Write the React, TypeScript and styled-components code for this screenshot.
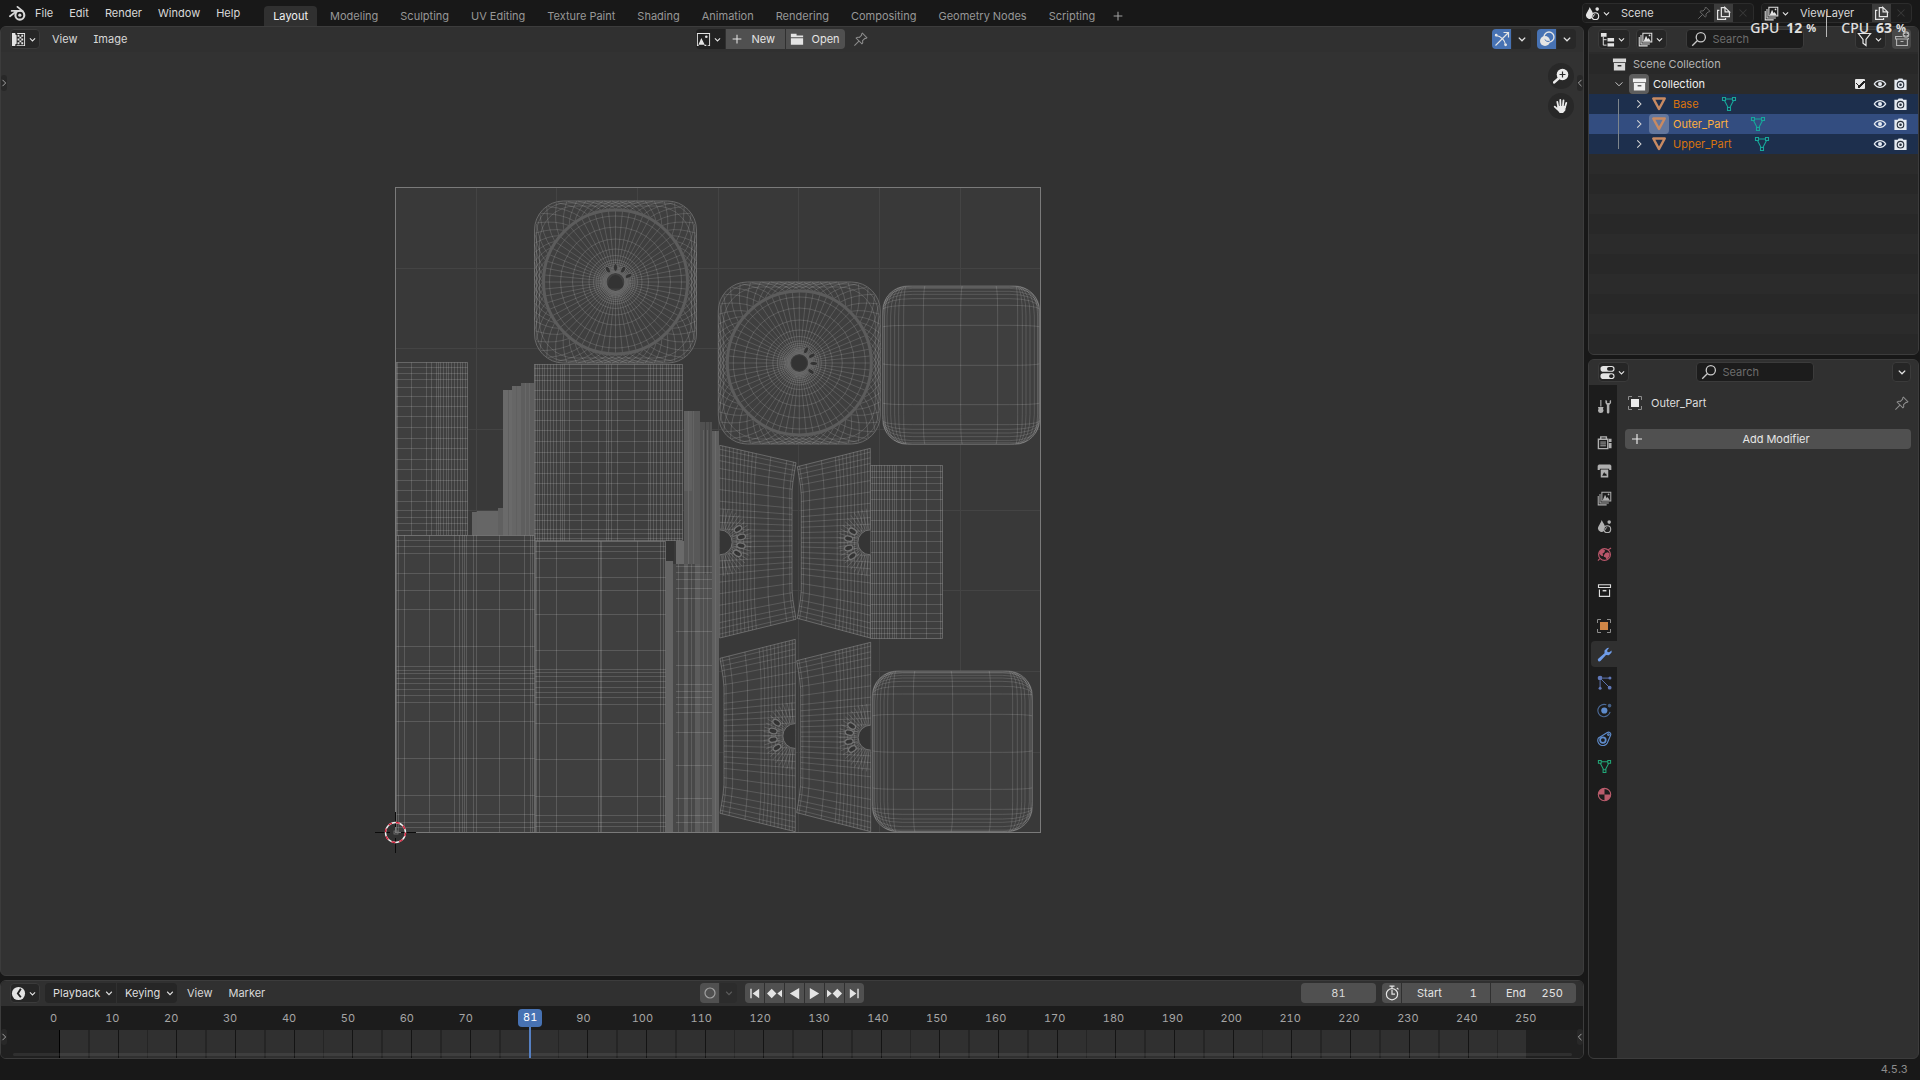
import React, { useState } from 'react';
import styled, { createGlobalStyle, css } from 'styled-components';

const GlobalStyle = createGlobalStyle`
  * { box-sizing: border-box; }
  html, body, #root { margin: 0; min-height: 100vh; }
  body {
    background: #181818;
    color: #d8d8d8;
    font-family: Inter, "Liberation Sans", sans-serif;
    font-size: 11px;
    line-height: 16px;
    font-feature-settings: "tnum", "cv08";
    overflow: hidden;
  }
  button, input { font: inherit; font-feature-settings: inherit; color: inherit; margin: 0; }
`;

/* ---------- icons ---------- */

const icons: Record<string, React.ReactNode> = {
  blender: (
    <g fill="none" stroke="currentColor" strokeLinecap="round" strokeLinejoin="round">
      <circle cx="10.2" cy="9.6" r="4.2" strokeWidth="2" />
      <circle cx="10.2" cy="9.6" r="1.5" fill="currentColor" stroke="none" />
      <path d="M8 1.8l5 4M2.5 5.6h7.5M6.5 6.2L.9 10.6" strokeWidth="1.7" />
    </g>
  ),
  down: <path d="M4.8 6.6L8 9.8l3.2-3.2" fill="none" stroke="currentColor" strokeWidth="1.3" />,
  right: <path d="M6 3.8L10.2 8 6 12.2" fill="none" stroke="currentColor" strokeWidth="1.2" />,
  left: <path d="M10 3.8L5.8 8l4.2 4.2" fill="none" stroke="currentColor" strokeWidth="1.2" />,
  bigdown: <path d="M3.4 5.8L8 10.4l4.6-4.6" fill="none" stroke="currentColor" strokeWidth="1.2" />,
  plus: <path d="M8 3v10M3 8h10" stroke="currentColor" strokeWidth="1.2" />,
  cross: <path d="M4 4l8 8M12 4l-8 8" stroke="currentColor" strokeWidth="1.2" />,
  uv: (
    <g fill="currentColor">
      <path d="M1 1h3.6v1.6L6 3.4v9L4.6 13v2H1z" />
      <path d="M6.6 1H15v14H6v-1h8V2H6.6z" />
      <path d="M7 3h2v2H7zM11 3h2v2h-2zM9 5h2v2H9zM7 7h2v2H7zM11 7h2v2h-2zM9 9h2v2H9zM7 11h2v2H7zM11 11h2v2h-2z" />
    </g>
  ),
  image: (
    <g fill="currentColor">
      <path d="M1 1h14v14h-2.5v-1H14V2H2v12h1v1H1z" />
      <path d="M2.5 13.5L5.7 6.5l3.6 7zM9 15h2v-1.4H9z" />
      <circle cx="11" cy="5" r="1.4" />
    </g>
  ),
  folder: <path d="M1 2h6.5v2H15v2H1zM1 7h14v7.5H1z" fill="currentColor" />,
  pin: (
    <path
      d="M10 1.2L14.8 6l-1 .9-1-.2-2.6 2.6c.5 1.4.2 2.6-.7 3.4L3.300 6.500c.9-.9 2.100-1.200 3.500-.7L9.300 3.200l-.2-1zM6.300 9.700L1.500 14.500"
      fill="none"
      stroke="currentColor"
      strokeWidth="1.1"
    />
  ),
  gizmo: (
    <g fill="none" stroke="currentColor" strokeWidth="1.2">
      <path d="M2 4.500c5 .5 9 4.500 9.500 9.500M1.500 14.500L14 2M9.500 1.500h5v5" />
      <circle cx="2.200" cy="4.200" r=".8" fill="currentColor" />
      <circle cx="11.600" cy="13.800" r=".8" fill="currentColor" />
    </g>
  ),
  overlays: (
    <g>
      <circle cx="6" cy="10" r="5" fill="currentColor" />
      <circle cx="10" cy="6" r="5" fill="none" stroke="currentColor" strokeWidth="1.3" />
      <path d="M5.700 8.500a4.500 4.500 0 0 0 4.800 1.900" fill="none" stroke="#4772b3" strokeWidth="1" />
    </g>
  ),
  zoom: (
    <g>
      <circle cx="9.500" cy="6.500" r="5.800" fill="currentColor" />
      <path d="M5.500 10.500L1 14.500" stroke="currentColor" strokeWidth="2.400" strokeLinecap="round" />
      <path d="M9.500 3.500v6M6.500 6.500h6" stroke="#2a2a2a" strokeWidth="1.200" />
    </g>
  ),
  hand: (
    <g stroke="currentColor" fill="none" strokeLinecap="round" strokeLinejoin="round">
      <path d="M5.300 9L4.300 3.800M7.500 8L7.300 2M9.900 8L10.500 2.400M12 9.200L13.300 4.800M4.600 11.400L1.700 8.600" strokeWidth="1.800" />
      <path d="M5 8.500h7.200l-.4 3.500-2 2.400H7L4.600 11.400z" fill="currentColor" strokeWidth="1.200" />
    </g>
  ),
  scene: (
    <g fill="currentColor">
      <path d="M5 1c1.200 3 3.600 5 3.600 8l-1 3.500A3.800 3.800 0 0 1 1 10.500C1 7 4 5 5 1z" />
      <circle cx="13" cy="3.300" r="1.900" />
      <circle cx="11" cy="10.800" r="3.600" fill="#222" stroke="currentColor" strokeWidth="1.200" />
      <path d="M9 11.500a2 2 0 0 1 1.800-2.400" fill="none" stroke="currentColor" strokeWidth=".9" />
    </g>
  ),
  copy: (
    <g fill="none" stroke="currentColor" strokeWidth="1.300">
      <path d="M9.500 1.700H5.700v9.600h8.600V6M9.500 1.500L14.500 6.300H9.700zM3.600 4.700H1.700v9.600h8.500v-1.600" />
    </g>
  ),
  viewlayer: (
    <g fill="none" stroke="currentColor" strokeWidth="1.100">
      <path d="M5.200 1.300h9.500v9.400H5.200zM3.200 3.300v9.500h9.400M1.300 5.300v9.500h9" />
      <path d="M6 10l2.600-6 1.700 3.600 1-1.300L13.800 10z" fill="currentColor" stroke="none" />
      <circle cx="12.300" cy="3.600" r=".9" fill="currentColor" stroke="none" />
    </g>
  ),
  outliner: (
    <g>
      <path d="M1 1h6v4H1zM8 6.500h7V10H8zM8 12h7v3.500H8z" fill="currentColor" />
      <path d="M3.500 5v9H7M3.500 8.200H7" fill="none" stroke="currentColor" />
    </g>
  ),
  search: (
    <g fill="none" stroke="currentColor" strokeWidth="1.300">
      <circle cx="9.800" cy="6.200" r="4.600" />
      <path d="M6.500 9.500L1.200 14.800" />
    </g>
  ),
  filter: <path d="M1.500 1.600h13L9.600 8v6.500L6.400 12V8z" fill="none" stroke="currentColor" strokeWidth="1.300" />,
  newcollection: (
    <g fill="none" stroke="currentColor" strokeWidth="1.100">
      <path d="M8.500 5.500H1.600V8h12.800V7M2.600 8v6.500h10.800V8M6.500 10.500h3" />
      <circle cx="12" cy="3.500" r="3.300" fill="currentColor" stroke="none" />
      <path d="M12 1.600v3.800M10.100 3.500h3.800" stroke="#444" />
    </g>
  ),
  box: <path d="M1 1.500h14v4H1zM2 6.500h12v8H2zm4 2v1.700h4V8.500z" fill="currentColor" fillRule="evenodd" />,
  boxline: (
    <g fill="none" stroke="currentColor" strokeWidth="1.200">
      <path d="M1.600 1.800h12.800v3H1.600zM2.600 7v7.200h10.800V7" />
      <path d="M6 8.200h4" strokeWidth="1.600" />
    </g>
  ),
  eye: (
    <g>
      <path d="M1.500 8C4.500 2.800 11.500 2.800 14.500 8 11.500 13 4.500 13 1.500 8z" fill="none" stroke="currentColor" strokeWidth="1.500" />
      <circle cx="8" cy="8" r="2.300" fill="currentColor" />
    </g>
  ),
  camera: (
    <g>
      <path d="M1.500 3H5l1-1.500h4L11 3h3.500v10.800h-13z" fill="currentColor" />
      <circle cx="8" cy="8.200" r="3.500" fill="none" stroke="#28303c" strokeWidth="1.200" />
      <circle cx="8" cy="8.200" r="1.400" fill="#28303c" />
    </g>
  ),
  mesh: <path d="M2.300 2.500h11.400L8 13z" fill="none" stroke="currentColor" strokeWidth="2.500" strokeLinejoin="round" />,
  meshdata: (
    <g fill="none" stroke="currentColor" strokeWidth="1.100">
      <path d="M4.500 3h7M3.500 4.500l3.600 7M12.500 4.500l-3.600 7" />
      <path d="M1.500 1.500h3v3h-3zM11.500 1.500h3v3h-3zM6.500 11.500h3v3h-3z" />
    </g>
  ),
  properties: (
    <g>
      <rect x=".5" y="1" width="15" height="6.300" rx="3" fill="currentColor" />
      <rect x=".5" y="8.700" width="15" height="6.300" rx="3" fill="currentColor" />
      <rect x="7.500" y="2.200" width="6.800" height="3.900" rx="1.900" fill="#222" />
      <rect x="9.800" y="9.900" width="4.500" height="3.900" rx="1.900" fill="#222" />
    </g>
  ),
  tools: (
    <g fill="currentColor">
      <path d="M3.500 1h1.200v7H3.500z" />
      <path d="M1 8.500h6l-.6 2 .6 2A3 3 0 0 1 4 15a3 3 0 0 1-3-2.500l.6-2z" />
      <path d="M9 1v3.300L10.500 6.500V14a1.300 1.300 0 0 0 2.700 0V6.500L15 4.300V1l-1.500.8v2.400h-2.700V1.800z" />
    </g>
  ),
  render: (
    <g fill="none" stroke="currentColor">
      <path d="M1.500 4.500h10v10h-10zM4 4.500V2h6v2.500" strokeWidth="1.500" />
      <path d="M3.500 7.500h6M3.500 9.500h6M3.500 11.500h6" />
      <path d="M12.500 4h3v3.500h-3zM12.500 8.500h3V14h-3z" fill="currentColor" stroke="none" />
    </g>
  ),
  output: (
    <g fill="currentColor">
      <path d="M2 1.500h12l1.300 1.500v4.500H13V6H3v1.500H.7V3z" />
      <path d="M4 7h8v8.500H4zm1.500 6.500h5L9.600 11l-1 .6-.9-2z" fillRule="evenodd" />
    </g>
  ),
  world: (
    <g>
      <circle cx="8" cy="8" r="6.300" fill="none" stroke="currentColor" strokeWidth="1.300" />
      <path d="M2.500 4.500L6 2.200l2.500 1.300-.5 2.200-2.200 1.500 1 1.800-1.500.8-3-2.500zM9 6.500l2.500-.8 2 1.300-.5 3-2.500 3.500-1.500-2.500-1.800-.5.3-2z" fill="currentColor" />
      <path d="M12 3l3-2M1 14.500l2-2" stroke="currentColor" strokeWidth="1.200" />
    </g>
  ),
  wrench: (
    <path
      d="M10.800 1L8 3.700v3L1.300 12.500a1.700 1.700 0 0 0 2.400 2.400L9.600 8.600l3 .1L15.400 6l.3-2.400L12.900 5.700l-1.800-.4-.2-1.900L13 .9z"
      fill="currentColor"
    />
  ),
  particles: (
    <g fill="currentColor">
      <circle cx="3.300" cy="3.300" r="2.600" />
      <circle cx="13.800" cy="3.300" r="1.600" />
      <circle cx="3.300" cy="14" r="1.600" />
      <circle cx="13.500" cy="13.500" r="2" />
      <path d="M6 3.300h7M3.300 6v7M5.200 5.200l8 8" stroke="currentColor" />
    </g>
  ),
  physics: (
    <g>
      <circle cx="7.800" cy="8" r="3.300" fill="currentColor" />
      <path d="M10 1.900A6.600 6.600 0 1 0 14 9.500" fill="none" stroke="currentColor" strokeWidth="1.200" opacity=".7" />
      <circle cx="13.400" cy="2.800" r="1.900" fill="currentColor" opacity=".6" />
    </g>
  ),
  constraint: (
    <g fill="none" stroke="currentColor" strokeWidth="1.200">
      <circle cx="6.300" cy="9.700" r="3" strokeWidth="1.900" />
      <path d="M1.500 7.500L11 1.600c2-1.200 4.400.7 3.500 2.900L11 12.700A5.400 5.400 0 1 1 1.500 7.500z" />
      <circle cx="12.200" cy="3.800" r=".9" />
    </g>
  ),
  material: (
    <g>
      <circle cx="8" cy="8" r="6.600" fill="none" stroke="currentColor" strokeWidth="1.200" />
      <path d="M8 8V1.400A6.600 6.600 0 0 0 1.400 8zM8 8v6.600A6.600 6.600 0 0 0 14.600 8z" fill="currentColor" />
    </g>
  ),
  clock: (
    <g>
      <circle cx="8" cy="8" r="7" fill="currentColor" />
      <path d="M10.500 3L7.300 8l3.200 4" fill="none" stroke="#222" strokeWidth="2" />
    </g>
  ),
  ring: <circle cx="8" cy="8" r="5" fill="none" stroke="currentColor" strokeWidth="1.200" />,
  first: <path d="M3.500 3H5v10H3.500zM13 3v10L6 8z" fill="currentColor" />,
  last: <path d="M11 3h1.500v10H11zM3 3v10l7-5z" fill="currentColor" />,
  prevkey: <path d="M5 3l5 5-5 5-5-5zM16 4v8l-5-4z" fill="currentColor" />,
  nextkey: <path d="M11 3l5 5-5 5-5-5zM0 4v8l5-4z" fill="currentColor" />,
  playback: <path d="M13 2v12L3 8z" fill="currentColor" />,
  play: <path d="M3 2v12l10-6z" fill="currentColor" />,
  stopwatch: (
    <g fill="none" stroke="currentColor" strokeWidth="1.200">
      <circle cx="8" cy="9.200" r="5.600" />
      <path d="M8 5v4.200h3M5.500 1.200h5M8 1.200v2.400M12.800 3l1.700 1.400" />
    </g>
  ),
};

const Svg = styled.svg`
  display: block;
  flex: none;
`;

function Icon({ name, size = 16, color }: { name: string; size?: number; color?: string }) {
  return (
    <Svg width={size} height={size} viewBox="0 0 16 16" color={color} aria-hidden="true">
      {icons[name]}
    </Svg>
  );
}

function ObjectIcon({ fill }: { fill: string }) {
  return (
    <Svg width={16} height={16} viewBox="0 0 16 16" aria-hidden="true">
      <rect x="4" y="4" width="8" height="8" fill={fill} />
      <path d="M1.500 5V1.500H5M11 1.500h3.500V5M14.500 11v3.500H11M5 14.500H1.500V11" fill="none" stroke="#8c8c8c" />
    </Svg>
  );
}

/* ---------- frame ---------- */

const Page = styled.div`
  display: grid;
  grid-template-rows: 26px 1fr 21px;
  height: 100vh;
`;

const Row = styled.div<{ $gap?: number }>`
  display: flex;
  align-items: center;
  gap: ${(p) => p.$gap ?? 0}px;
`;

const TopBar = styled.header`
  display: flex;
  justify-content: space-between;
  padding: 0 8px 0 9px;
`;

const MenuButton = styled.button`
  height: 20px;
  padding: 0 8px;
  border: 0;
  background: none;
  color: #d8d8d8;
  white-space: nowrap;
`;

const TabList = styled.nav`
  display: flex;
  align-items: flex-end;
  gap: 4px;
  height: 26px;
  margin-left: 16px;
`;

const Tab = styled.button<{ $active?: boolean }>`
  height: 20px;
  padding: 0 9px;
  border: 0;
  border-radius: 4px 4px 0 0;
  background: ${(p) => (p.$active ? '#303030' : 'none')};
  color: ${(p) => (p.$active ? '#f2f2f2' : '#979797')};
  white-space: nowrap;
`;

const Body = styled.main`
  display: grid;
  grid-template-columns: 1fr 331px;
  gap: 4px;
  padding-right: 1px;
  min-height: 0;
`;

const Column = styled.div`
  display: flex;
  flex-direction: column;
  gap: 4px;
  min-width: 0;
`;

const Area = styled.section<{ $bg: string; $height?: number }>`
  position: relative;
  display: flex;
  flex-direction: column;
  ${(p) => (p.$height ? `flex: none; height: ${p.$height}px;` : 'flex: 1; min-height: 0;')}
  border: 1px solid #3c3c3c;
  border-radius: 6px;
  background: ${(p) => p.$bg};
  overflow: hidden;
`;

const Header = styled.div<{ $left?: number }>`
  position: relative;
  display: grid;
  grid-template-columns: 1fr auto 1fr;
  align-items: center;
  flex: none;
  height: 25px;
  padding: 0 7px 1px ${(p) => p.$left ?? 9}px;
  background: #303030;
`;

const HeaderCenter = styled(Row)<{ $trail?: number }>`
  padding-right: ${(p) => p.$trail ?? 0}px;
`;

const HeaderEnd = styled(Row)`
  justify-content: flex-end;
`;

const widget = css`
  display: flex;
  align-items: center;
  height: 20px;
  border: 1px solid #3b3b3b;
  border-radius: 4px;
  background: #262626;
`;

const DropButton = styled.button<{ $width?: number }>`
  ${widget}
  justify-content: center;
  width: ${(p) => p.$width ?? 30}px;
  padding: 0;
  color: #e4e4e4;
`;

function Drop({ icon, label, width }: { icon: string; label: string; width?: number }) {
  return (
    <DropButton aria-label={label} $width={width}>
      <Icon name={icon} size={15} />
      <Icon name="down" size={13} />
    </DropButton>
  );
}

const Group = styled.div`
  display: flex;
  gap: 1px;
  border-radius: 4px;
  overflow: hidden;
`;

const Fill = styled.button<{ $width?: number; $bg?: string; $color?: string }>`
  display: flex;
  align-items: center;
  justify-content: center;
  width: ${(p) => p.$width ?? 19}px;
  height: 20px;
  padding: 0;
  border: 0;
  background: ${(p) => p.$bg ?? '#505050'};
  color: ${(p) => p.$color ?? '#e4e4e4'};
`;

const TextFill = styled(Fill)`
  justify-content: flex-start;
  gap: 8px;
  padding-left: 4px;
`;

const IconButton = styled.button<{ $color?: string }>`
  display: flex;
  align-items: center;
  justify-content: center;
  width: 20px;
  height: 20px;
  padding: 0;
  border: 0;
  background: none;
  color: ${(p) => p.$color ?? '#d8d8d8'};
`;

const TextMenu = styled.button<{ $width: number }>`
  display: flex;
  align-items: center;
  justify-content: space-between;
  width: ${(p) => p.$width}px;
  height: 20px;
  padding: 0 0 0 8px;
  border: 0;
  background: #262626;
  color: #dedede;
`;

const SearchBox = styled.label`
  ${widget}
  width: 118px;
  padding: 0 4px;
  gap: 6px;
  background: #1c1c1c;
  color: #c8c8c8;
  input {
    width: 100%;
    min-width: 0;
    padding: 0;
    border: 0;
    outline: 0;
    background: none;
  }
  input::placeholder { color: #6c6c6c; opacity: 1; }
`;

const DataBlock = styled.div`
  ${widget}
  border-color: #2c2c2c;
  background: #1d1d1d;
  overflow: hidden;
`;

const NameInput = styled.input<{ $width: number }>`
  width: ${(p) => p.$width}px;
  height: 18px;
  padding: 0 0 0 7px;
  border: 0;
  outline: 0;
  background: none;
`;

const Stats = styled.aside`
  position: absolute;
  top: 11px;
  right: 14px;
  display: flex;
  align-items: flex-end;
  height: 26px;
  font-family: "Noto Sans", sans-serif;
  font-size: 14px;
  font-weight: 500;
  line-height: 18px;
  color: #e0e0e0;
  pointer-events: none;
  b { margin-left: 7px; font-size: 14px; }
  small { margin-left: 4px; font-size: 11px; font-weight: 700; }
`;

const StatBar = styled.i`
  width: 1px;
  height: 26px;
  margin: 0 14px 0 10px;
  background: #b8b8b8;
`;

/* ---------- UV canvas ---------- */

const Canvas = styled.svg`
  position: absolute;
  inset: 0;
  width: 100%;
  height: 100%;
`;

type Origin = [number, number];
const snap = (v: number) => Math.round(v) + 0.5;
const at = (o: number, v: number) => o + v / 3;

function Lattice({ o, xs, ys }: { o: Origin; xs: number[]; ys: number[] }) {
  const px = xs.map((v) => snap(at(o[0], v) - 0.5));
  const py = ys.map((v) => snap(at(o[1], v) - 0.5));
  const [l, r, t, b] = [px[0], px[px.length - 1], py[0], py[py.length - 1]];
  return (
    <g>
      <rect x={l} y={t} width={r - l} height={b - t} fill="#3f3f3f" stroke="#606060" strokeWidth=".5" />
      <path className="wire" d={px.map((x) => `M${x} ${t}V${b}`).join('')} />
      <path className="wire" d={py.map((y) => `M${l} ${y}H${r}`).join('')} />
    </g>
  );
}

function Disc({ cx, cy, petals, flat }: { cx: number; cy: number; petals: number[]; flat?: boolean }) {
  const half = 81;
  const edge = (a: number) => half / Math.pow(Math.pow(Math.abs(Math.cos(a)), 6) + Math.pow(Math.abs(Math.sin(a)), 6), 1 / 6);
  const pt = (a: number, r: number) => `${(cx + Math.cos(a) * r).toFixed(1)} ${(cy + Math.sin(a) * r).toFixed(1)}`;
  const turns = Array.from({ length: 64 }, (_, i) => (i * Math.PI) / 32);
  const spokes = turns.map((a) => `M${pt(a, 9)}L${pt(a, 73)}`).join('');
  const twist = (d: number) =>
    turns.map((a) => `M${pt(a, 73)}Q${pt(a + d / 3, (73 + edge(a + d)) / 2)} ${pt(a + d, edge(a + d))}`).join('');
  const rings = [66, 55, 43, 33, 26.5, 22, 19.500, 17.500, 15.500, 14, 12.500, 11, 9.500];
  return (
    <g>
      <rect x={cx - half} y={cy - half} width={162} height={162} rx={29} fill="#3f3f3f" stroke="#686868" />
      <rect className="wire" x={cx - 79} y={cy - 79} width={158} height={158} rx={30} />
      <rect className="wire" x={cx - 76} y={cy - 76} width={152} height={152} rx={36} />
      <path className="wire" d={twist(0.24)} />
      <path className="wire" d={twist(-0.24)} />
      <path className="wire" d={spokes} />
      <circle cx={cx} cy={cy} r={72} fill="none" stroke="#5c5c5c" strokeWidth={3} />
      {rings.map((r) => (
        <circle key={r} className="wire" cx={cx} cy={cy} r={r} />
      ))}
      <circle cx={cx} cy={cy} r={11} fill="none" stroke="#686868" strokeWidth={4} opacity={0.6} />
      {flat ? (
        <path d={`M${cx - 7.500} ${cy + 3}a7.500 10 0 0 1 15 0q0 3.500-4 3.500h-7q-4 0-4-3.500z`} fill="#333" />
      ) : (
        <circle cx={cx} cy={cy} r={7.700} fill="#333" />
      )}
      {petals.map((deg) => (
        <ellipse
          key={deg}
          cx={cx + 14.500}
          cy={cy}
          rx={3.800}
          ry={2.100}
          transform={`rotate(${deg} ${cx} ${cy})`}
          fill="#333"
          stroke="#6a6a6a"
          strokeWidth={0.800}
        />
      ))}
    </g>
  );
}

function Pillow({ o, xs, ys }: { o: Origin; xs: number[]; ys: number[] }) {
  const px = xs.map((v) => at(o[0], v));
  const py = ys.map((v) => at(o[1], v));
  const [l, r, t, b] = [px[0], px[px.length - 1], py[0], py[py.length - 1]];
  const bend = (v: number, lo: number, hi: number) => {
    const dl = v - lo;
    const dh = hi - v;
    if (dl < 24) return (24 - dl) * 0.75;
    if (dh < 24) return -(24 - dh) * 0.75;
    return dl < dh ? 1.500 : -1.500;
  };
  const cols = px.map((x) => {
    const k = bend(x, l, r);
    return `M${x + k} ${t}Q${x} ${t + 5} ${x} ${t + 30}V${b - 30}Q${x} ${b - 5} ${x + k} ${b}`;
  });
  const rows = py.map((y) => {
    const k = bend(y, t, b);
    return `M${l} ${y + k}Q${l + 5} ${y} ${l + 30} ${y}H${r - 30}Q${r - 5} ${y} ${r} ${y + k}`;
  });
  const id = `pillow${Math.round(l)}`;
  return (
    <g>
      <clipPath id={id}>
        <rect x={l} y={t} width={r - l} height={b - t} rx={25} />
      </clipPath>
      <rect x={l} y={t} width={r - l} height={b - t} rx={25} fill="#3f3f3f" stroke="#676767" />
      <g clipPath={`url(#${id})`}>
        <path className="wire" d={cols.join('')} />
        <path className="wire" d={rows.join('')} />
      </g>
      <rect className="wire" x={l + 1.500} y={t + 1.500} width={r - l - 3} height={b - t - 3} rx={24} />
    </g>
  );
}

interface FanProps {
  o: Origin;
  narrow: [number, number, number];
  wide: [number, number, number];
  bow: number;
  hole: number;
  petals: [number, number][];
}

function Fan({ o, narrow, wide, bow, hole, petals }: FanProps) {
  const pos = (u: number, v: number): [number, number] => {
    const x = narrow[0] + (wide[0] - narrow[0]) * u + bow * (1 - u) * Math.min(1, 7 * v * (1 - v));
    const top = narrow[1] + (wide[1] - narrow[1]) * u;
    const bottom = narrow[2] + (wide[2] - narrow[2]) * u;
    return [at(o[0], x), at(o[1], top + (bottom - top) * v)];
  };
  const line = (pts: [number, number][]) => 'M' + pts.map((p) => `${p[0].toFixed(1)} ${p[1].toFixed(1)}`).join('L');
  const steps = Array.from({ length: 17 }, (_, i) => i / 16);
  const us = [0, 0.03, 0.12, 0.33, 0.52, 0.57, 0.62, 0.67, 0.72, 0.77, 0.82, 0.87, 0.92, 0.96, 1];
  const vs = [0, 0.02, 0.05, 0.08, 0.12, 0.17, 0.23, 0.29, 0.33, 0.365, 0.4, 0.435, 0.47, 0.5, 0.53, 0.565, 0.6, 0.635, 0.67, 0.71, 0.77, 0.83, 0.88, 0.92, 0.95, 0.98, 1];
  const outline = line([...steps.map((v) => pos(0, v)), pos(1, 1), pos(1, 0)]) + 'Z';
  const hx = at(o[0], wide[0]);
  const hy = at(o[1], hole);
  const dir = wide[0] > narrow[0] ? -1 : 1;
  const sweep = dir > 0 ? 1 : 0;
  const spokes = Array.from({ length: 23 }, (_, i) => {
    const a = ((i - 11) * Math.PI) / 24;
    const c = Math.cos(a) * dir;
    const s = Math.sin(a);
    return `M${hx + c * 13} ${hy + s * 13}L${hx + c * 32} ${hy + s * 34}`;
  });
  const arc = (r: number) => `M${hx} ${hy - r}A${r} ${r} 0 0 ${sweep} ${hx} ${hy + r}`;
  return (
    <g>
      <path d={outline} fill="#3f3f3f" stroke="#606060" strokeWidth={0.600} />
      <path className="wire" d={us.map((u) => line(steps.map((v) => pos(u, v)))).join('')} />
      <path className="wire" d={vs.map((v) => line([pos(0, v), pos(0.5, v), pos(1, v)])).join('')} />
      <path className="wire" d={spokes.join('')} />
      <path d={arc(14)} fill="#555" opacity={0.700} />
      <path d={arc(12.500)} fill="#353535" stroke="#707070" />
      {petals.map(([x, y]) => {
        const ex = at(o[0], x);
        const ey = at(o[1], y);
        const deg = (Math.atan2(ey - hy, ex - hx) * 180) / Math.PI;
        return (
          <ellipse key={y} cx={ex} cy={ey} rx={4.200} ry={2.600} transform={`rotate(${deg} ${ex} ${ey})`} fill="#333" stroke="#747474" strokeWidth={1.300} />
        );
      })}
    </g>
  );
}

const strips: [number, number, number, number, string][] = [
  [472, 512, 5, 24, '#656565'],
  [477, 511, 22, 25, '#666'],
  [498, 508, 6, 28, '#606060'],
  [503, 390, 9, 146, '#6a6a6a'],
  [512, 386, 9, 150, '#666'],
  [521, 383, 13, 153, '#5e5e5e'],
  [684, 411, 16, 153, '#585858'],
  [684, 411, 8, 80, '#606060'],
  [700, 422, 12, 410, '#505050'],
  [712, 431, 7, 402, '#5f5f5f'],
  [676, 541, 8, 23, '#6a6a6a'],
  [666, 561, 7, 271, '#646464'],
  [673, 564, 3, 268, '#484848'],
  [676, 564, 19, 268, '#484848'],
  [695, 564, 5, 268, '#5c5c5c'],
  [703, 430, 1, 402, '#626262'],
  [707, 430, 1, 402, '#626262'],
  [705, 422, 1, 152, '#424242'],
  [709, 422, 1, 152, '#464646'],
  [715, 431, 1, 402, '#6c6c6c'],
  [684, 564, 4, 268, '#5c5c5c'],
  [678, 564, 1, 268, '#5e5e5e'],
  [691, 564, 1, 268, '#5e5e5e'],
  [508, 390, 1, 146, '#606060'],
  [516, 386, 1, 150, '#606060'],
  [525, 383, 1, 153, '#686868'],
  [529, 383, 1, 153, '#686868'],
  [688, 411, 1, 153, '#686868'],
  [693, 411, 1, 153, '#646464'],
];

const A: Origin = [380, 180];
const B: Origin = [700, 270];
const C: Origin = [380, 520];
const D: Origin = [680, 620];

const gridLines = [1, 2, 3, 4, 5, 6, 7];

const WireGroup = styled.g`
  .wire {
    fill: none;
    stroke: #fff;
    stroke-opacity: 0.14;
  }
`;

function UvLayout() {
  const rungs = [566, 572, 579, 588, 598, 631, 665, 684, 691, 697, 704, 712, 732, 765, 798, 815, 822];
  return (
    <Canvas viewBox="1 27 1582 948" preserveAspectRatio="xMinYMin slice" role="img" aria-label="UV layout">
      <rect x="395.500" y="187.500" width="645" height="645" fill="#393939" />
      <path
        d={gridLines.map((i) => `M${snap(395 + i * 80.650)} 188V832M396 ${snap(187 + i * 80.650)}H1040`).join('')}
        stroke="#444"
        fill="none"
      />
      <WireGroup>
        {strips.map(([x, y, w, h, c]) => (
          <rect key={`${x}-${y}-${c}`} x={x} y={y} width={w} height={h} fill={c} />
        ))}
        <path className="wire" d={rungs.map((y) => `M676 ${y}.5H712`).join('')} />
        <rect x="665" y="541" width="9" height="20" fill="#333" />
        <Disc cx={615.500} cy={282} petals={[-122, -90, -58, -25]} flat />
        <Disc cx={799.300} cy={363} petals={[-62, -30, 2, 36]} />
        <Pillow
          o={B}
          xs={[548, 554, 561, 572, 584, 596, 611, 670, 782, 893, 953, 967, 978, 990, 1003, 1013, 1019]}
          ys={[48, 55, 64, 73, 86, 106, 166, 286, 404, 464, 478, 489, 500, 512, 523]}
        />
        <Pillow
          o={D}
          xs={[577, 584, 591, 601, 612, 623, 640, 700, 818, 932, 998, 1012, 1025, 1035, 1048, 1057]}
          ys={[153, 159, 166, 174, 184, 199, 222, 283, 397, 508, 568, 583, 597, 607, 620, 635]}
        />
        <Lattice
          o={A}
          xs={[48, 52, 94, 138, 155, 170, 176, 182, 190, 198, 206, 213, 222, 232, 240, 246, 256, 261]}
          ys={[546, 562, 580, 598, 622, 649, 679, 709, 742, 775, 805, 838, 868, 900, 931, 963, 990, 1012, 1030, 1050, 1067]}
        />
        <Lattice
          o={A}
          xs={[463, 467, 472, 479, 486, 494, 502, 511, 520, 530, 541, 547, 553, 568, 605, 655, 680, 686, 693, 712, 762, 804, 812, 820, 830, 840, 848, 858, 866, 875, 883, 891, 899, 906]}
          ys={[552, 566, 586, 602, 631, 658, 691, 720, 752, 785, 817, 847, 880, 910, 943, 973, 1002, 1022, 1047, 1060, 1075, 1081]}
        />
        <Lattice
          o={B}
          xs={[512, 516, 522, 529, 537, 545, 553, 561, 569, 577, 584, 590, 604, 613, 631, 679, 721, 728]}
          ys={[585, 604, 622, 641, 660, 688, 720, 751, 784, 814, 846, 877, 910, 940, 972, 1002, 1030, 1054, 1075, 1090, 1105]}
        />
        <Lattice
          o={C}
          xs={[48, 55, 73, 149, 223, 238, 248, 254, 260, 280, 290, 359, 432, 450, 458, 463]}
          ys={[47, 62, 78, 100, 160, 212, 268, 379, 438, 450, 459, 476, 490, 508, 526, 547, 604, 715, 825, 884, 906, 922, 938]}
        />
        <Lattice
          o={C}
          xs={[466, 470, 479, 530, 655, 660, 665, 772, 840, 851, 856]}
          ys={[64, 78, 95, 114, 172, 212, 283, 391, 448, 458, 468, 484, 502, 517, 532, 553, 610, 718, 829, 886, 906, 920, 938]}
        />
        <Fan o={B} narrow={[288, 578, 1048]} wide={[59, 526, 1104]} bow={-12} hole={817} petals={[[114, 777], [124, 801], [123, 827], [112, 850]]} />
        <Fan o={B} narrow={[292, 590, 1045]} wide={[511, 535, 1104]} bow={12} hole={817} petals={[[458, 784], [446, 806], [446, 834], [457, 858]]} />
        <Fan o={D} narrow={[120, 115, 580]} wide={[346, 58, 635]} bow={12} hole={348} petals={[[290, 308], [279, 333], [279, 359], [291, 383]]} />
        <Fan o={D} narrow={[350, 122, 578]} wide={[572, 67, 635]} bow={12} hole={353} petals={[[515, 318], [508, 338], [507, 365], [517, 387]]} />
      </WireGroup>
      <rect x="395.500" y="187.500" width="645" height="645" fill="none" stroke="#7a7a7a" />
      <g fill="none">
        <path d="M375 832.500H390M401 832.500H416M395.500 812V827M395.500 838V853" stroke="#0c0c0c" />
        <circle cx="395.500" cy="832.500" r="10" stroke="#f0f0f0" strokeWidth="1.400" />
        <circle cx="395.500" cy="832.500" r="10" stroke="#d8213c" strokeWidth="1.400" strokeDasharray="3.930 3.930" />
        <rect x="394" y="831" width="4" height="3" stroke="#777" strokeWidth=".8" />
      </g>
    </Canvas>
  );
}

const Nav = styled.div`
  position: absolute;
  top: 36px;
  right: 9px;
  display: flex;
  flex-direction: column;
  gap: 4px;
`;

const NavButton = styled.button`
  display: flex;
  align-items: center;
  justify-content: center;
  width: 26px;
  height: 26px;
  padding: 0;
  border: 0;
  border-radius: 50%;
  background: #282828;
  color: #ececec;
`;

const Handle = styled.button<{ $side: 'left' | 'right'; $top: number }>`
  position: absolute;
  ${(p) => p.$side}: 0;
  top: ${(p) => p.$top}px;
  display: flex;
  align-items: center;
  justify-content: center;
  width: 6px;
  height: 16px;
  padding: 0;
  border: 0;
  border-radius: 3px;
  background: #282828;
  color: #b0b0b0;
`;

/* ---------- timeline ---------- */

const Ruler = styled.div`
  display: flex;
  flex: none;
  height: 24px;
  padding: 0 28px 0 23px;
  background: #1c1c1c;
  span {
    flex: 1 1 0;
    text-align: center;
    line-height: 24px;
    color: #a6a6a6;
  }
`;

const Track = styled.div`
  position: relative;
  display: flex;
  flex: 1;
  padding: 0 57px 0 52px;
  background: #202020;
`;

const Cell = styled.div`
  flex: 1 1 0;
  border-left: 1px solid #141414;
  background: linear-gradient(90deg, transparent 49%, #252525 49%, #252525 51%, transparent 51%), #303030;
  &:first-child { margin-left: 6px; border-left-color: #000; flex-basis: -6px; }
  &:last-child { border-right: 1px solid #000; }
`;

const Scroll = styled.div`
  position: absolute;
  left: 12px;
  right: 11px;
  bottom: 2px;
  height: 3px;
  border-radius: 2px;
  background: rgba(255, 255, 255, 0.07);
`;

const PlayLayer = styled.div`
  position: absolute;
  top: 28px;
  bottom: 0;
  left: 52px;
  right: 57px;
  pointer-events: none;
`;

const Playhead = styled.div`
  position: absolute;
  top: 0;
  bottom: 0;
  display: flex;
  flex-direction: column;
  align-items: center;
  width: 24px;
  margin-left: -12px;
  b {
    width: 24px;
    height: 18px;
    border-radius: 4px;
    background: #4772b3;
    color: #fff;
    font-weight: 400;
    line-height: 17px;
    text-align: center;
  }
  i {
    flex: 1;
    width: 2px;
    background: #5680c2;
  }
`;

const Field = styled.label<{ $width: number }>`
  display: flex;
  align-items: center;
  justify-content: space-between;
  width: ${(p) => p.$width}px;
  height: 20px;
  padding: 0 13px 0 15px;
  background: #505050;
  color: #e4e4e4;
  input {
    width: 28px;
    padding: 0;
    border: 0;
    outline: 0;
    background: none;
    text-align: right;
  }
`;

const FrameInput = styled.input`
  width: 75px;
  height: 20px;
  padding: 0;
  border: 0;
  border-radius: 4px;
  background: #505050;
  text-align: center;
`;

const decades = Array.from({ length: 26 }, (_, i) => i * 10);

function Timeline() {
  const [frame, setFrame] = useState('81');
  const current = Number(frame) || 0;
  return (
    <Area $bg="#1c1c1c" $height={79}>
      <Header>
        <Row $gap={5}>
          <Drop icon="clock" label="Editor type" />
          <Row $gap={2}>
            <Group>
              <TextMenu $width={71}>Playback<Icon name="down" size={14} /></TextMenu>
              <TextMenu $width={60}>Keying<Icon name="down" size={14} /></TextMenu>
            </Group>
            <Row>
              <MenuButton>View</MenuButton>
              <MenuButton>Marker</MenuButton>
            </Row>
          </Row>
        </Row>
        <HeaderCenter $gap={8} $trail={22}>
          <Group>
            <Fill aria-label="Auto keying" $color="#a0a0a0"><Icon name="ring" /></Fill>
            <Fill aria-label="Auto keying options" $width={17} $bg="#2c2c2c" $color="#5c5c5c"><Icon name="down" size={14} /></Fill>
          </Group>
          <Group>
            {['first', 'prevkey', 'playback', 'play', 'nextkey', 'last'].map((n) => (
              <Fill key={n} aria-label={n}><Icon name={n} size={15} /></Fill>
            ))}
          </Group>
        </HeaderCenter>
        <HeaderEnd $gap={6}>
          <FrameInput aria-label="Current frame" value={frame} onChange={(e) => setFrame(e.target.value)} />
          <Group>
            <Fill aria-label="Use preview range"><Icon name="stopwatch" /></Fill>
            <Field $width={88}>Start<input defaultValue="1" /></Field>
            <Field $width={85}>End<input defaultValue="250" /></Field>
          </Group>
        </HeaderEnd>
      </Header>
      <Ruler>
        {decades.map((n) => (
          <span key={n}>{Math.abs(n - current) > 3 ? n : null}</span>
        ))}
      </Ruler>
      <Track>
        {decades.slice(1).map((n) => (
          <Cell key={n} />
        ))}
        <Scroll />
      </Track>
      <PlayLayer>
        <Playhead style={{ left: `${(current / 250) * 100}%` }}>
          <b>{current}</b>
          <i />
        </Playhead>
      </PlayLayer>
      <Handle $side="left" $top={48}><Icon name="right" size={12} /></Handle>
      <Handle $side="right" $top={48}><Icon name="left" size={12} /></Handle>
    </Area>
  );
}

/* ---------- outliner ---------- */

const Tree = styled.div`
  flex: 1;
  padding-top: 2px;
  background: repeating-linear-gradient(#282828 0 20px, #2b2b2b 20px 40px) 0 2px;
`;

const TreeRow = styled.div<{ $bg?: string }>`
  display: flex;
  align-items: center;
  height: 20px;
  padding: 0 8px 0 20px;
  background: ${(p) => p.$bg ?? 'transparent'};
`;

const Slot = styled.span<{ $lit?: boolean }>`
  display: flex;
  align-items: center;
  justify-content: center;
  flex: none;
  width: 20px;
  height: 20px;
  border-radius: 4px;
  background: ${(p) => (p.$lit ? 'rgba(255,255,255,.24)' : 'none')};
`;

const Guide = styled.span<{ $trim?: 'top' | 'bottom' }>`
  flex: none;
  align-self: ${(p) => (p.$trim === 'top' ? 'flex-end' : 'flex-start')};
  width: 10px;
  height: ${(p) => (p.$trim ? 15 : 20)}px;
  margin-right: 10px;
  border-right: 1px solid #7d858c;
`;

const Label = styled.span<{ $color?: string }>`
  padding-left: 4px;
  color: ${(p) => p.$color ?? '#b4b4b4'};
`;

const RowEnd = styled.span`
  display: flex;
  margin-left: auto;
`;

const Check = styled.input`
  appearance: none;
  width: 10px;
  height: 10px;
  margin: 5px;
  border-radius: 1px;
  background-color: #e6e6e6;
  background-image: linear-gradient(45deg, transparent 40%, #222 40%, #222 60%, transparent 60%),
    linear-gradient(-45deg, transparent 42%, #222 42%, #222 58%, transparent 58%);
  background-size: 4px 4px, 7px 7px;
  background-position: 1px 4px, 3px 2px;
  background-repeat: no-repeat;
`;

const DataSlot = styled.span`
  margin-left: 22px;
`;

const objects = [
  { name: 'Base', color: '#d9730d', bg: '#1d2f4d' },
  { name: 'Outer_Part', color: '#ffaf3f', bg: '#334d80' },
  { name: 'Upper_Part', color: '#d9730d', bg: '#1d2f4d' },
];

function Visibility({ name }: { name: string }) {
  return (
    <>
      <IconButton aria-label={`Hide ${name}`} $color="#e6ebf2"><Icon name="eye" size={14} /></IconButton>
      <IconButton aria-label={`Disable ${name} in renders`} $color="#e6ebf2"><Icon name="camera" size={15} /></IconButton>
    </>
  );
}

function Outliner() {
  return (
    <Area $bg="#282828" $height={329}>
      <Header $left={9}>
        <Row $gap={6}>
          <Drop icon="outliner" label="Editor type" width={32} />
          <Drop icon="viewlayer" label="Display mode" width={31} />
        </Row>
        <HeaderCenter $trail={20}>
          <SearchBox>
            <Icon name="search" />
            <input placeholder="Search" aria-label="Search outliner" />
          </SearchBox>
        </HeaderCenter>
        <HeaderEnd $gap={6}>
          <Drop icon="filter" label="Filter" width={31} />
          <Group><Fill aria-label="New collection" $bg="#484848" $color="#b4b4b4"><Icon name="newcollection" /></Fill></Group>
        </HeaderEnd>
      </Header>
      <Tree>
        <TreeRow>
          <Slot><Icon name="box" size={15} color="#d8d8d8" /></Slot>
          <Label>Scene Collection</Label>
        </TreeRow>
        <TreeRow>
          <Slot><Icon name="bigdown" size={12} /></Slot>
          <Slot $lit><Icon name="box" size={15} color="#f0f0f0" /></Slot>
          <Label $color="#f0f0f0">Collection</Label>
          <RowEnd>
            <Check type="checkbox" defaultChecked aria-label="Include collection" />
            <Visibility name="Collection" />
          </RowEnd>
        </TreeRow>
        {objects.map((o, i) => (
          <TreeRow key={o.name} $bg={o.bg}>
            <Guide $trim={i === 0 ? 'top' : i === 2 ? 'bottom' : undefined} />
            <Slot><Icon name="right" size={14} /></Slot>
            <Slot $lit={i === 1}><Icon name="mesh" color="#c88a62" /></Slot>
            <Label $color={o.color}>{o.name}</Label>
            <DataSlot><Icon name="meshdata" color="#17a79a" /></DataSlot>
            <RowEnd><Visibility name={o.name} /></RowEnd>
          </TreeRow>
        ))}
      </Tree>
    </Area>
  );
}

/* ---------- properties ---------- */

const Split = styled.div`
  display: grid;
  grid-template-columns: 28px 1fr;
  flex: 1;
`;

const PropTabs = styled.nav`
  display: flex;
  flex-direction: column;
  gap: 2px;
  padding: 8px 0 0 2px;
  background: #1c1c1c;
`;

const PropTab = styled.button<{ $active?: boolean; $spaced?: boolean; $color: string }>`
  display: flex;
  align-items: center;
  justify-content: center;
  height: 26px;
  margin-top: ${(p) => (p.$spaced ? 8 : 0)}px;
  padding: 0;
  border: 0;
  border-radius: 4px 0 0 4px;
  background: ${(p) => (p.$active ? '#303030' : 'none')};
  color: ${(p) => p.$color};
`;

const Panel = styled.div`
  padding: 8px 7px 0 8px;
`;

const PanelTitle = styled(Row)`
  height: 20px;
  padding-left: 2px;
  color: #dedede;
  button { margin-left: auto; }
`;

const AddButton = styled.button`
  display: grid;
  grid-template-columns: 16px 1fr;
  align-items: center;
  width: 100%;
  height: 20px;
  margin-top: 16px;
  padding: 0 4px;
  border: 0;
  border-radius: 4px;
  background: #505050;
  color: #e6e6e6;
`;

const tabs: { icon: string; color: string; label: string; spaced?: boolean; active?: boolean }[] = [
  { icon: 'tools', color: '#b0b0b0', label: 'Tool' },
  { icon: 'render', color: '#b0b0b0', label: 'Render', spaced: true },
  { icon: 'output', color: '#b0b0b0', label: 'Output' },
  { icon: 'viewlayer', color: '#b0b0b0', label: 'View Layer' },
  { icon: 'scene', color: '#b0b0b0', label: 'Scene' },
  { icon: 'world', color: '#b9566a', label: 'World' },
  { icon: 'boxline', color: '#dcdcdc', label: 'Collection', spaced: true },
  { icon: 'object', color: '#cf8647', label: 'Object', spaced: true },
  { icon: 'wrench', color: '#6f9ce8', label: 'Modifiers', active: true },
  { icon: 'particles', color: '#6078b8', label: 'Particles' },
  { icon: 'physics', color: '#5f8ccc', label: 'Physics' },
  { icon: 'constraint', color: '#5f8ccc', label: 'Constraints' },
  { icon: 'meshdata', color: '#22a878', label: 'Data' },
  { icon: 'material', color: '#bb5c6c', label: 'Material' },
];

function Properties() {
  return (
    <Area $bg="#303030">
      <Header $left={9}>
        <Row><Drop icon="properties" label="Editor type" width={31} /></Row>
        <SearchBox>
          <Icon name="search" />
          <input placeholder="Search" aria-label="Search properties" />
        </SearchBox>
        <HeaderEnd><DropButton aria-label="Options" $width={19}><Icon name="down" /></DropButton></HeaderEnd>
      </Header>
      <Split>
        <PropTabs>
          {tabs.map((t) => (
            <PropTab key={t.label} aria-label={t.label} $active={t.active} $spaced={t.spaced} $color={t.color}>
              {t.icon === 'object' ? <ObjectIcon fill={t.color} /> : <Icon name={t.icon} size={15} />}
            </PropTab>
          ))}
        </PropTabs>
        <Panel>
          <PanelTitle $gap={8}>
            <ObjectIcon fill="#ececec" />
            <span>Outer_Part</span>
            <IconButton aria-label="Pin" $color="#8c8c8c"><Icon name="pin" size={15} /></IconButton>
          </PanelTitle>
          <AddButton>
            <Icon name="plus" />
            <span>Add Modifier</span>
          </AddButton>
        </Panel>
      </Split>
    </Area>
  );
}

/* ---------- page ---------- */

const StatusBar = styled.footer`
  padding: 2px 12px 0 0;
  text-align: right;
  color: #8c8c8c;
`;

const Logo = styled.span`
  padding-right: 1px;
`;

const Menus = styled(Row)`
  height: 26px;
`;

const workspaces = ['Layout', 'Modeling', 'Sculpting', 'UV Editing', 'Texture Paint', 'Shading', 'Animation', 'Rendering', 'Compositing', 'Geometry Nodes', 'Scripting'];

export default function App() {
  return (
    <Page>
      <GlobalStyle />
      <TopBar>
        <Row>
          <Menus>
            <Logo><Icon name="blender" size={17} /></Logo>
            {['File', 'Edit', 'Render', 'Window', 'Help'].map((m) => (
              <MenuButton key={m}>{m}</MenuButton>
            ))}
          </Menus>
          <TabList>
            {workspaces.map((w, i) => (
              <Tab key={w} $active={i === 0}>{w}</Tab>
            ))}
            <IconButton aria-label="Add workspace" $color="#a0a0a0"><Icon name="plus" size={14} /></IconButton>
          </TabList>
        </Row>
        <Row $gap={7}>
          <DataBlock>
            <Fill aria-label="Browse scene" $width={31} $bg="#1d1d1d"><Row><Icon name="scene" size={15} /><Icon name="down" size={13} /></Row></Fill>
            <NameInput aria-label="Scene name" $width={80} defaultValue="Scene" />
            <IconButton aria-label="Pin scene" $color="#6c6c6c"><Icon name="pin" size={14} /></IconButton>
            <Fill aria-label="New scene" $bg="#3c3c3c"><Icon name="copy" size={15} /></Fill>
            <IconButton aria-label="Delete scene" $color="#3a3a3a"><Icon name="cross" size={14} /></IconButton>
          </DataBlock>
          <DataBlock>
            <Fill aria-label="Browse view layer" $width={31} $bg="#1d1d1d"><Row><Icon name="viewlayer" size={15} /><Icon name="down" size={13} /></Row></Fill>
            <NameInput aria-label="View layer name" $width={79} defaultValue="ViewLayer" />
            <Fill aria-label="New view layer" $bg="#3c3c3c"><Icon name="copy" size={15} /></Fill>
            <IconButton aria-label="Delete view layer" $color="#3a3a3a"><Icon name="cross" size={14} /></IconButton>
          </DataBlock>
        </Row>
      </TopBar>
      <Body>
        <Column>
          <Area $bg="#323232">
            <UvLayout />
            <Header>
              <Row $gap={4}>
                <Drop icon="uv" label="Editor type" />
                <Row>
                  <MenuButton>View</MenuButton>
                  <MenuButton>Image</MenuButton>
                </Row>
              </Row>
              <HeaderCenter $gap={6} $trail={20}>
                <Group>
                  <Fill aria-label="Browse image" $width={29} $bg="#222"><Row><Icon name="image" size={15} /><Icon name="down" size={13} /></Row></Fill>
                  <TextFill $width={59}><Icon name="plus" size={14} />New</TextFill>
                  <TextFill $width={59}><Icon name="folder" size={14} />Open</TextFill>
                </Group>
                <IconButton aria-label="Pin" $color="#8c8c8c"><Icon name="pin" size={15} /></IconButton>
              </HeaderCenter>
              <HeaderEnd $gap={6}>
                <Group>
                  <Fill aria-label="Show gizmo" $bg="#4772b3"><Icon name="gizmo" /></Fill>
                  <Fill aria-label="Gizmo options" $bg="#282828"><Icon name="down" /></Fill>
                </Group>
                <Group>
                  <Fill aria-label="Show overlays" $bg="#4772b3"><Icon name="overlays" /></Fill>
                  <Fill aria-label="Overlay options" $bg="#282828"><Icon name="down" /></Fill>
                </Group>
              </HeaderEnd>
            </Header>
            <Nav>
              <NavButton aria-label="Zoom"><Icon name="zoom" /></NavButton>
              <NavButton aria-label="Pan"><Icon name="hand" /></NavButton>
            </Nav>
            <Handle $side="left" $top={48}><Icon name="right" size={12} /></Handle>
            <Handle $side="right" $top={48}><Icon name="left" size={12} /></Handle>
          </Area>
          <Timeline />
        </Column>
        <Column>
          <Outliner />
          <Properties />
        </Column>
      </Body>
      <StatusBar>4.5.3</StatusBar>
      <Stats>
        GPU<b>12</b><small>%</small>
        <StatBar />
        CPU<b>63</b><small>%</small>
      </Stats>
    </Page>
  );
}
